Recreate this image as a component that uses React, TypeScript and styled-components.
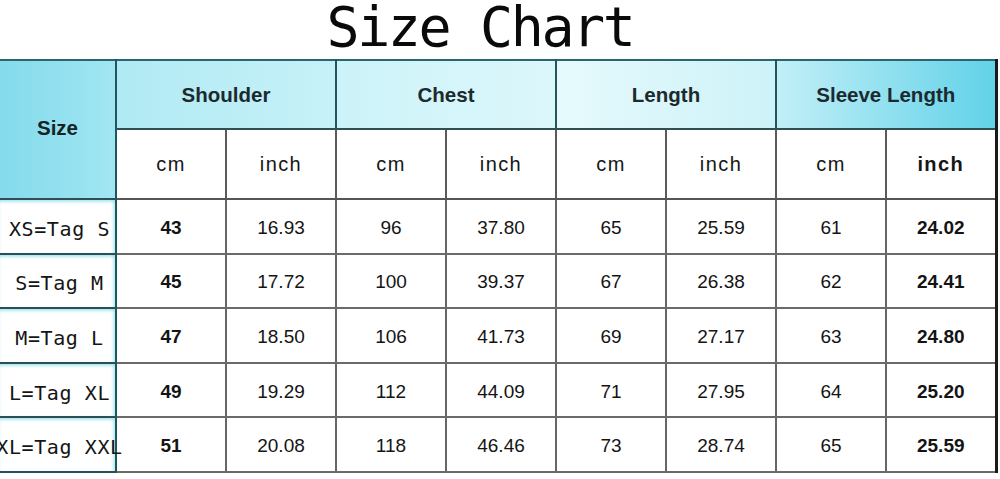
import React from "react";
import styled, { createGlobalStyle } from "styled-components";

const GlobalStyle = createGlobalStyle`
  html, body {
    margin: 0;
    padding: 0;
    background: #ffffff;
  }
  body {
    font-family: "Liberation Sans", Arial, sans-serif;
    color: #111;
  }
`;

const Page = styled.div`
  width: 1000px;
  height: 479px;
  overflow: hidden;
  background: #fff;
  display: flex;
  flex-direction: column;
`;

const Title = styled.h1`
  margin: 0;
  height: 59px;
  padding: 0 40px 0 0;
  font-family: "DejaVu Sans Mono", "Liberation Mono", monospace;
  font-weight: 400;
  font-size: 55px;
  line-height: 54px;
  letter-spacing: -2.4px;
  text-align: center;
  color: #0a0a0a;
`;

const Table = styled.table`
  width: 997px;
  table-layout: fixed;
  border-collapse: collapse;
  border-top: 2px solid #2a6670;
  border-right: 3px solid #1a1a1a;
  border-bottom: 2px solid #3a3a3a;
`;

const GroupHead = styled.th<{ $from: string; $to: string }>`
  height: 67px;
  padding: 0;
  background: linear-gradient(90deg, ${(p) => p.$from}, ${(p) => p.$to});
  border-left: 2px solid #24545c;
  border-bottom: 2px solid #2f4f55;
  font-size: 20.5px;
  font-weight: 700;
  color: #1b2a2e;
  text-align: center;
  vertical-align: middle;
`;

const SizeHead = styled.th`
  padding: 0 0 4px 0;
  background: linear-gradient(90deg, #84dbec, #95e1ef 60%, #a2e6f2);
  border-bottom: 2px solid #2f4f55;
  border-right: 2px solid #1d5560;
  font-size: 20.5px;
  font-weight: 700;
  color: #152226;
  text-align: center;
  vertical-align: middle;
`;

const UnitHead = styled.th<{ $bold?: boolean }>`
  height: 68px;
  padding: 0;
  background: #fff;
  border-left: 2px solid #5a5a5a;
  border-bottom: 2px solid #555;
  font-size: 20px;
  letter-spacing: 1.4px;
  font-weight: ${(p) => (p.$bold ? 700 : 400)};
  color: #161616;
  text-align: center;
  vertical-align: middle;
`;

const Row = styled.tr`
  height: 54.6px;
`;

const LabelCell = styled.td`
  padding: 0;
  border-bottom: 2px solid #2b4f55;
  border-right: 2px solid #1d5560;
  background: #fff;
  box-shadow: inset 0 3px 3px -1px rgba(110, 215, 232, 0.55),
    inset -3px 0 3px -1px rgba(110, 215, 232, 0.45);
  vertical-align: middle;
`;

const LabelBox = styled.div`
  display: flex;
  justify-content: center;
  padding: 5px 0 0 4px;
  white-space: nowrap;
`;

const LabelText = styled.span`
  font-family: "DejaVu Sans Mono", "Liberation Mono", monospace;
  font-size: 20px;
  letter-spacing: 0.6px;
  color: #151515;
`;

const ValueCell = styled.td<{ $bold?: boolean }>`
  padding: 3px 0 0 0;
  border-left: 2px solid #666;
  border-bottom: 2px solid #6a6a6a;
  background: #fff;
  font-size: 19px;
  font-weight: ${(p) => (p.$bold ? 700 : 400)};
  color: #141414;
  text-align: center;
  vertical-align: middle;
`;

const groups = [
  { name: "Shoulder", from: "#b0eaf4", to: "#c7f1f8" },
  { name: "Chest", from: "#ccf3f9", to: "#dcf7fb" },
  { name: "Length", from: "#e6fafc", to: "#cdf2f8" },
  { name: "Sleeve Length", from: "#c2eff7", to: "#62d2e8" },
];

const rows = [
  { label: "XS=Tag S", vals: ["43", "16.93", "96", "37.80", "65", "25.59", "61", "24.02"] },
  { label: "S=Tag M", vals: ["45", "17.72", "100", "39.37", "67", "26.38", "62", "24.41"] },
  { label: "M=Tag L", vals: ["47", "18.50", "106", "41.73", "69", "27.17", "63", "24.80"] },
  { label: "L=Tag XL", vals: ["49", "19.29", "112", "44.09", "71", "27.95", "64", "25.20"] },
  { label: "XL=Tag XXL", vals: ["51", "20.08", "118", "46.46", "73", "28.74", "65", "25.59"] },
];

const boldCols = [0, 7];

export default function App() {
  return (
    <Page>
      <GlobalStyle />
      <Title>Size Chart</Title>
      <Table>
        <colgroup>
          <col style={{ width: 116 }} />
          {Array.from({ length: 8 }).map((_, i) => (
            <col key={i} style={{ width: 110 }} />
          ))}
        </colgroup>
        <thead>
          <tr>
            <SizeHead rowSpan={2}>Size</SizeHead>
            {groups.map((g) => (
              <GroupHead key={g.name} colSpan={2} $from={g.from} $to={g.to}>
                {g.name}
              </GroupHead>
            ))}
          </tr>
          <tr>
            {groups.map((g, gi) => (
              <React.Fragment key={g.name}>
                <UnitHead>cm</UnitHead>
                <UnitHead $bold={gi === 3}>inch</UnitHead>
              </React.Fragment>
            ))}
          </tr>
        </thead>
        <tbody>
          {rows.map((r) => (
            <Row key={r.label}>
              <LabelCell>
                <LabelBox>
                  <LabelText>{r.label}</LabelText>
                </LabelBox>
              </LabelCell>
              {r.vals.map((v, i) => (
                <ValueCell key={i} $bold={boldCols.includes(i)}>
                  {v}
                </ValueCell>
              ))}
            </Row>
          ))}
        </tbody>
      </Table>
    </Page>
  );
}
